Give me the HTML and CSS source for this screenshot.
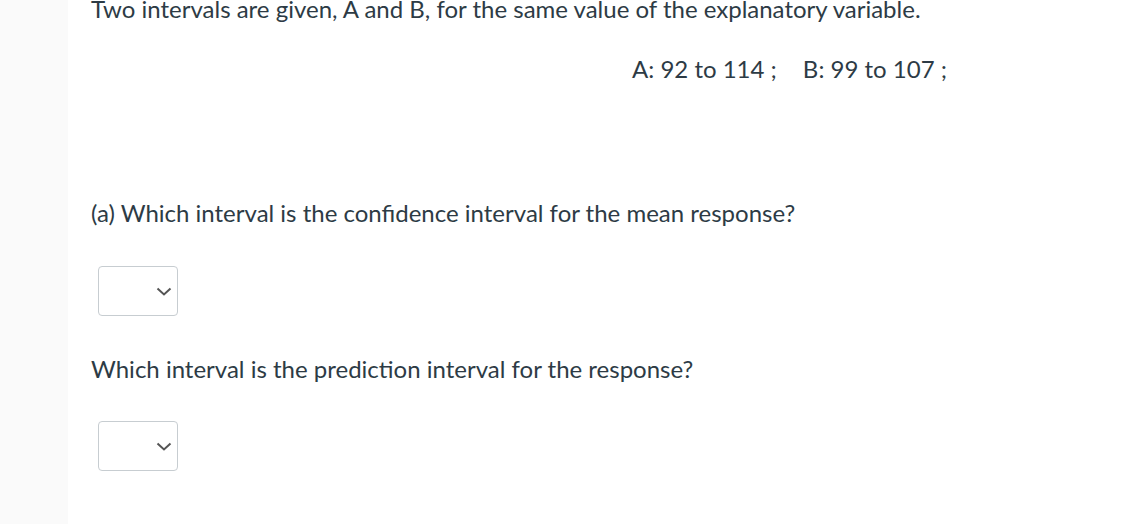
FILE: index.html
```html
<!DOCTYPE html>
<html>
<head>
<meta charset="utf-8">
<link rel="stylesheet" href="styles.css">
</head>
<body>
<div class="page">
  <aside class="side"></aside>
  <main class="content">
    <p class="line first">Two intervals are given, A and B, for the same value of the explanatory variable.</p>
    <p class="line intervals"><span>A: 92 to 114 ;</span><span class="gapb">B: 99 to 107 ;</span></p>
    <p class="line qa">(a) Which interval is the confidence interval for the mean response?</p>
    <div class="select sel-a"><svg class="chev" width="16" height="9" viewBox="0 0 16 9"><path d="M1.5 1.5 L8 7.5 L14.5 1.5" fill="none" stroke="#555" stroke-width="2"/></svg></div>
    <p class="line qb">Which interval is the prediction interval for the response?</p>
    <div class="select sel-b"><svg class="chev" width="16" height="9" viewBox="0 0 16 9"><path d="M1.5 1.5 L8 7.5 L14.5 1.5" fill="none" stroke="#555" stroke-width="2"/></svg></div>
  </main>
</div>
</body>
</html>
```
FILE: styles.css
```css
html, body { margin: 0; padding: 0; background: #fff; }
body { font-family: Lato, "Open Sans", sans-serif; color: #2d3b45; font-size: 24px; }
.page { display: flex; height: 524px; overflow: hidden; }
.side { width: 68px; flex: none; background: #fafafa; }
.content { flex: 1; padding-left: 23px; }
.line { margin: 0; line-height: 28px; white-space: nowrap; }
.first { margin-top: -5px; }
.intervals { margin-top: 32px; padding-left: 541px; }
.gapb { margin-left: 26px; }
.qa { margin-top: 116px; }
.select { width: 78px; height: 48px; border: 1px solid #c7cdd1; border-radius: 4px; margin-left: 7px; display: flex; align-items: center; justify-content: flex-end; box-sizing: content-box; }
.sel-a { margin-top: 39px; }
.sel-b { margin-top: 38px; }
.chev { margin-right: 5px; margin-top: 1px; }
.qb { margin-top: 39px; }
```
